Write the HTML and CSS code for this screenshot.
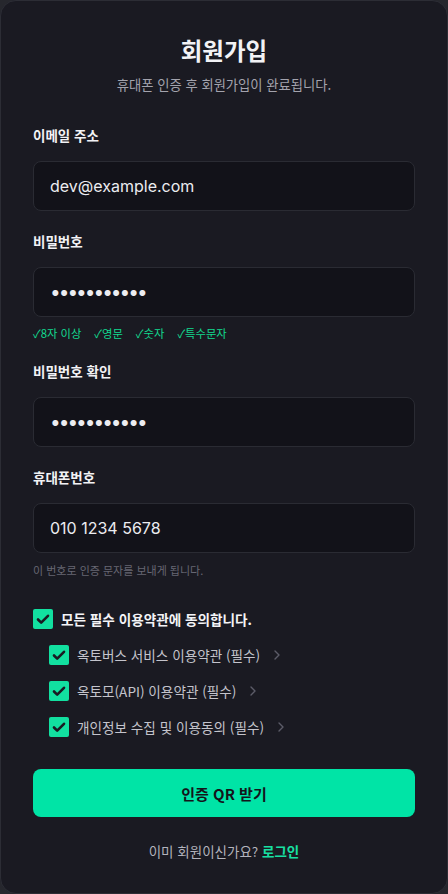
FILE: index.html
```html
<!DOCTYPE html>
<html lang="ko">
    <head>
        <meta charset="utf-8"/>
        <meta name="viewport" content="width=device-width, initial-scale=1.0"/>
        <title>회원가입</title>
        <link rel="stylesheet" href="styles.css">
    </head>
    <body>
        <div class="card">
            <h1>회원가입</h1>
            <p class="subtitle">휴대폰 인증 후 회원가입이 완료됩니다.</p>

            <form class="form">
                <div class="field">
                    <label for="email">이메일 주소</label>
                    <input id="email" type="email" value="dev@example.com">
                </div>

                <div class="field">
                    <label for="pw">비밀번호</label>
                    <input id="pw" class="dots" type="text" value="•••••••••••">
                    <div class="rules">
                        <span>✓8자 이상</span>
                        <span>✓영문</span>
                        <span>✓숫자</span>
                        <span>✓특수문자</span>
                    </div>
                </div>

                <div class="field">
                    <label for="pw2">비밀번호 확인</label>
                    <input id="pw2" class="dots" type="text" value="•••••••••••">
                </div>

                <div class="field">
                    <label for="phone">휴대폰번호</label>
                    <input id="phone" type="tel" value="010 1234 5678">
                    <p class="hint">이 번호로 인증 문자를 보내게 됩니다.</p>
                </div>

                <div class="terms">
                    <div class="check all">
                        <span class="box"><svg viewBox="0 0 20 20" width="20" height="20"><path d="M5 10.5l3.2 3.2L15 6.8" fill="none" stroke="#1a1a22" stroke-width="2.6" stroke-linecap="round" stroke-linejoin="round"/></svg></span>
                        <span>모든 필수 이용약관에 동의합니다.</span>
                    </div>
                    <div class="check sub">
                        <span class="box"><svg viewBox="0 0 20 20" width="20" height="20"><path d="M5 10.5l3.2 3.2L15 6.8" fill="none" stroke="#1a1a22" stroke-width="2.6" stroke-linecap="round" stroke-linejoin="round"/></svg></span>
                        <span>옥토버스 서비스 이용약관 (필수)</span>
                        <svg class="chev" viewBox="0 0 10 12" width="10" height="12"><path d="M3 2l4 4-4 4" fill="none" stroke="#5c5c68" stroke-width="1.4" stroke-linecap="round" stroke-linejoin="round"/></svg>
                    </div>
                    <div class="check sub">
                        <span class="box"><svg viewBox="0 0 20 20" width="20" height="20"><path d="M5 10.5l3.2 3.2L15 6.8" fill="none" stroke="#1a1a22" stroke-width="2.6" stroke-linecap="round" stroke-linejoin="round"/></svg></span>
                        <span>옥토모(API) 이용약관 (필수)</span>
                        <svg class="chev" viewBox="0 0 10 12" width="10" height="12"><path d="M3 2l4 4-4 4" fill="none" stroke="#5c5c68" stroke-width="1.4" stroke-linecap="round" stroke-linejoin="round"/></svg>
                    </div>
                    <div class="check sub">
                        <span class="box"><svg viewBox="0 0 20 20" width="20" height="20"><path d="M5 10.5l3.2 3.2L15 6.8" fill="none" stroke="#1a1a22" stroke-width="2.6" stroke-linecap="round" stroke-linejoin="round"/></svg></span>
                        <span>개인정보 수집 및 이용동의 (필수)</span>
                        <svg class="chev" viewBox="0 0 10 12" width="10" height="12"><path d="M3 2l4 4-4 4" fill="none" stroke="#5c5c68" stroke-width="1.4" stroke-linecap="round" stroke-linejoin="round"/></svg>
                    </div>
                </div>

                <button type="button" class="submit">인증 QR 받기</button>
            </form>

            <p class="footer">이미 회원이신가요? <a href="#">로그인</a></p>
        </div>
    </body>
</html>
```

FILE: styles.css
```css
*{margin:0;padding:0;box-sizing:border-box;}

html, body{
    height: 100%;
}

body{
    background: #26272d;
    font-family: Inter, "Noto Sans CJK KR", sans-serif;
    color: #f2f2f5;
}

.card{
    display: flex;
    flex-direction: column;
    height: 100%;
    padding: 33px 32px 0 32px;
    border: 1px solid #2c2d35;
    border-radius: 16px;
    background: #1a1a22;
}

h1{
    text-align: center;
    font-family: "Noto Sans CJK KR", sans-serif;
    font-size: 23.5px;
    font-weight: 700;
    line-height: 32px;
}

.subtitle{
    margin-top: 10px;
    text-align: center;
    font-family: "Noto Sans CJK KR", sans-serif;
    font-size: 13.3px;
    line-height: 18px;
    color: #a3a3ad;
}

.form{
    display: flex;
    flex-direction: column;
    margin-top: 32px;
}

.field{
    display: flex;
    flex-direction: column;
    margin-bottom: 21px;
}

label{
    font-family: "Noto Sans CJK KR", sans-serif;
    font-size: 13.5px;
    font-weight: 700;
    line-height: 18px;
    margin-bottom: 17px;
}

input{
    height: 50px;
    padding: 0 16px;
    border: 1px solid #2a2b33;
    border-radius: 8px;
    background: #121219;
    font-family: Inter, "Noto Sans CJK KR", sans-serif;
    font-size: 16px;
    color: #ececf0;
    outline: none;
}

input.dots{
    font-size: 19px;
    letter-spacing: -2px;
}

.rules{
    display: flex;
    gap: 13px;
    margin-top: 9px;
    margin-bottom: 0;
    font-family: "Noto Sans CJK KR", sans-serif;
    font-size: 11.3px;
    line-height: 15px;
    color: #12d98f;
}

.hint{
    margin-top: 10px;
    margin-bottom: -2px;
    font-family: "Noto Sans CJK KR", sans-serif;
    font-size: 11px;
    line-height: 15px;
    color: #676773;
}

.terms{
    display: flex;
    flex-direction: column;
    gap: 16px;
    margin-top: 12px;
}

.check{
    display: flex;
    align-items: center;
    gap: 8px;
    font-family: "Noto Sans CJK KR", sans-serif;
    font-size: 13.6px;
    line-height: 20px;
}

.check.all{
    font-weight: 700;
    color: #f4f4f7;
}

.check.sub{
    padding-left: 16px;
    color: #c4c4cc;
}

.box{
    display: flex;
    width: 20px;
    height: 20px;
    border-radius: 2px;
    background: #12e0a0;
}

.chev{
    margin-left: 4px;
}

.submit{
    margin-top: 32px;
    height: 48px;
    border: none;
    border-radius: 8px;
    background: #00e4a6;
    font-family: "Noto Sans CJK KR", sans-serif;
    font-size: 15px;
    font-weight: 700;
    color: #14141a;
    cursor: pointer;
}

.footer{
    margin-top: 25px;
    text-align: center;
    font-family: "Noto Sans CJK KR", sans-serif;
    font-size: 13.5px;
    line-height: 18px;
    color: #b3b3bc;
}

.footer a{
    font-weight: 700;
    color: #18e0a2;
    text-decoration: none;
}
```
